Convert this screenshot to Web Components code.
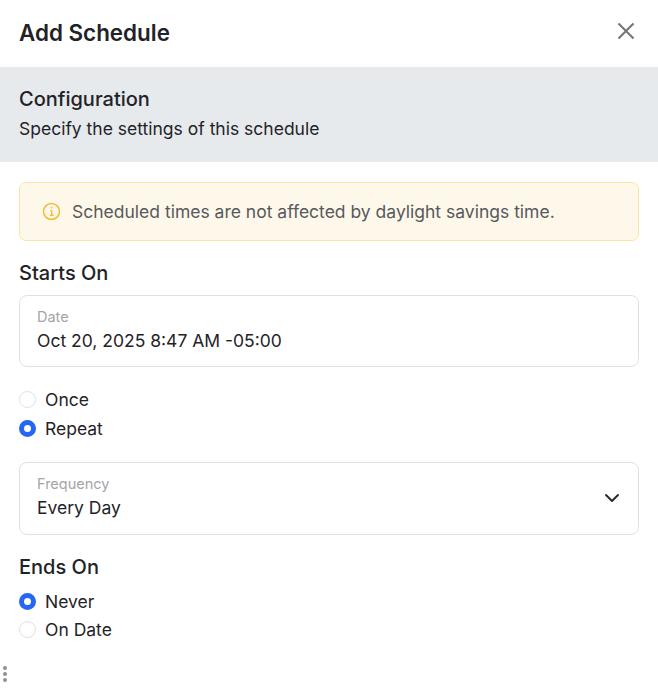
<!DOCTYPE html>
<html>
<head>
<meta charset="utf-8">
<title>Add Schedule</title>
<style>
  html, body { margin: 0; background: #fff; }
  body { font-family: Inter, "Liberation Sans", sans-serif; color: #1f2328; }
</style>
</head>
<body>
<schedule-panel>
  <panel-header slot="header">Add Schedule</panel-header>
  <section-band title="Configuration" subtitle="Specify the settings of this schedule"></section-band>
  <form-body>
    <info-alert>Scheduled times are not affected by daylight savings time.</info-alert>
    <section-title style="margin-top:21px">Starts On</section-title>
    <form-field label="Date" value="Oct 20, 2025 8:47 AM -05:00" style="margin-top:11px;height:72px"></form-field>
    <radio-group style="margin-top:21px;--row-gap:7px">
      <radio-item>Once</radio-item>
      <radio-item checked>Repeat</radio-item>
    </radio-group>
    <form-field label="Frequency" value="Every Day" select style="margin-top:23px"></form-field>
    <section-title style="margin-top:21px">Ends On</section-title>
    <radio-group style="margin-top:12px;--row-gap:6px">
      <radio-item checked>Never</radio-item>
      <radio-item>On Date</radio-item>
    </radio-group>
  </form-body>
  <drag-handle></drag-handle>
</schedule-panel>

<script>
// small helper, every element just stamps its markup into an open shadow root
class ShadowEl extends HTMLElement {
  constructor() {
    super();
    this.attachShadow({mode: 'open'});
  }
  render(html) {
    this.shadowRoot.innerHTML = html;
  }
}

class SchedulePanel extends ShadowEl {
  connectedCallback() {
    this.render(`
      <style>
        :host { display: block; position: relative; width: 658px; height: 695px; overflow: hidden; background: #fff; }
      </style>
      <slot name="header"></slot>
      <slot></slot>
    `);
  }
}

class PanelHeader extends ShadowEl {
  connectedCallback() {
    this.render(`
      <style>
        :host { display: flex; align-items: center; justify-content: space-between; height: 67px; padding: 0 20px 2px 19px; box-sizing: border-box; }
        .title { font-size: 22.4px; font-weight: 600; color: #1f2328; }
        svg { display: block; width: 24px; height: 24px; margin-top: -3px; }
      </style>
      <div class="title"><slot></slot></div>
      <svg viewBox="0 0 24 24" fill="none" stroke="#757575" stroke-width="2.1">
        <path d="M4.5 4.5 19.5 19.5M19.5 4.5 4.5 19.5"/>
      </svg>
    `);
  }
}

class SectionBand extends ShadowEl {
  connectedCallback() {
    this.render(`
      <style>
        :host { display: block; height: 95px; box-sizing: border-box; padding: 19px 19px 0; background: #e7eaed; }
        .t { font-size: 20px; line-height: 26px; font-weight: 500; color: #1f2328; }
        .s { font-size: 17.5px; line-height: 24px; margin-top: 5px; color: #1f2328; }
      </style>
      <div class="t">${this.getAttribute('title')}</div>
      <div class="s">${this.getAttribute('subtitle')}</div>
    `);
  }
}

class FormBody extends ShadowEl {
  connectedCallback() {
    this.render(`
      <style>
        :host { display: block; padding: 20px 19px 0; }
      </style>
      <slot></slot>
    `);
  }
}

class InfoAlert extends ShadowEl {
  connectedCallback() {
    this.render(`
      <style>
        :host { display: flex; align-items: center; gap: 11px; height: 59px; box-sizing: border-box; padding: 0 10px 1px 22px; background: #fef8ea; border: 1px solid #fbe5a3; border-radius: 7px; font-size: 17.5px; color: #57595c; }
        svg { flex: none; width: 19px; height: 19px; }
      </style>
      <svg viewBox="0 0 18 18" fill="none" stroke="#f2bd3b">
        <circle cx="9" cy="9" r="7.6" stroke-width="1.5"/>
        <path d="M7.7 8.2H9.2V12.5M7.4 12.6H11" stroke-width="1.3"/>
        <path d="M8.3 5.3H9.7" stroke-width="1.7"/>
      </svg>
      <div><slot></slot></div>
    `);
  }
}

class SectionTitle extends ShadowEl {
  connectedCallback() {
    this.render(`
      <style>
        :host { display: block; font-size: 20px; line-height: 22px; font-weight: 500; color: #1f2328; }
      </style>
      <slot></slot>
    `);
  }
}

class FormField extends ShadowEl {
  connectedCallback() {
    const chevron = this.hasAttribute('select') ? `
      <svg viewBox="0 0 16 10" fill="none" stroke="#24282d" stroke-width="1.9" stroke-linecap="round" stroke-linejoin="round">
        <path d="M2 2 8 8 14 2"/>
      </svg>` : '';
    this.render(`
      <style>
        :host { display: flex; align-items: center; justify-content: space-between; height: 73px; box-sizing: border-box; padding: 0 18px 2px 17px; background: #fff; border: 1px solid #dfe1e6; border-radius: 8px; }
        .label { font-size: 14.5px; line-height: 18px; color: #a3a5a8; }
        .value { font-size: 17.5px; line-height: 24px; margin-top: 3px; color: #1f2328; }
        svg { width: 16px; height: 10px; }
      </style>
      <div>
        <div class="label">${this.getAttribute('label')}</div>
        <div class="value">${this.getAttribute('value')}</div>
      </div>
      ${chevron}
    `);
  }
}

class RadioGroup extends ShadowEl {
  connectedCallback() {
    this.render(`
      <style>
        :host { display: flex; flex-direction: column; gap: var(--row-gap, 7px); }
      </style>
      <slot></slot>
    `);
  }
}

class RadioItem extends ShadowEl {
  connectedCallback() {
    this.render(`
      <style>
        :host { display: flex; align-items: center; gap: 9px; height: 22px; font-size: 17.5px; color: #1f2328; }
        .dot { width: 17px; height: 17px; box-sizing: border-box; border-radius: 50%; border: 1px solid #dfe1e6; background: #fff; }
        :host([checked]) .dot { border: 5px solid #2566f5; }
      </style>
      <span class="dot"></span>
      <span><slot></slot></span>
    `);
  }
}

class DragHandle extends ShadowEl {
  connectedCallback() {
    this.render(`
      <style>
        :host { position: absolute; left: 3px; top: 666px; display: flex; flex-direction: column; gap: 2px; }
        i { display: block; width: 4px; height: 4px; border-radius: 50%; background: #8f9194; }
      </style>
      <i></i><i></i><i></i>
    `);
  }
}

customElements.define('schedule-panel', SchedulePanel);
customElements.define('panel-header', PanelHeader);
customElements.define('section-band', SectionBand);
customElements.define('form-body', FormBody);
customElements.define('info-alert', InfoAlert);
customElements.define('section-title', SectionTitle);
customElements.define('form-field', FormField);
customElements.define('radio-group', RadioGroup);
customElements.define('radio-item', RadioItem);
customElements.define('drag-handle', DragHandle);
</script>
</body>
</html>
